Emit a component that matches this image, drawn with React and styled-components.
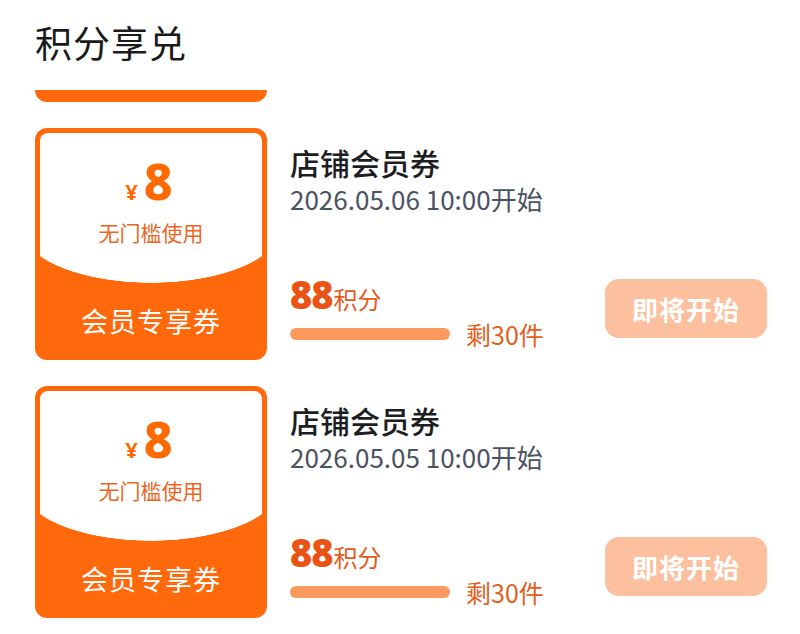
import React, { useLayoutEffect, useRef } from "react";
import styled, { createGlobalStyle } from "styled-components";

const GlobalStyle = createGlobalStyle`
  html, body {
    margin: 0;
    padding: 0;
    background: #ffffff;
  }
  body {
    font-family: "Noto Sans CJK SC", "Noto Sans", sans-serif;
  }
  * { box-sizing: border-box; }
`;

const Page = styled.div`
  width: 800px;
  height: 634px;
  padding: 0 33px 0 35px;
  display: flex;
  flex-direction: column;
  overflow: hidden;
  background: #ffffff;
`;

const Header = styled.h1`
  margin: 0;
  padding-top: 20px;
  font-size: 37px;
  line-height: 44px;
  font-weight: 400;
  color: #1a1a1a;
  letter-spacing: 1px;
  flex: none;
`;

const Viewport = styled.div`
  margin-top: 26px;
  flex: 1;
  min-height: 0;
  overflow: hidden;
`;

const List = styled.div`
  display: flex;
  flex-direction: column;
  gap: 26px;
`;

const Row = styled.div`
  display: flex;
  gap: 23px;
  height: 232px;
  flex: none;
`;

const Card = styled.div`
  width: 232px;
  flex: none;
  background: #ff680b;
  border-radius: 12px;
  padding: 5px 5px 0;
  display: flex;
  flex-direction: column;
  overflow: hidden;
`;

const CardTop = styled.div`
  height: 150px;
  border-radius: 8px 8px 0 0;
  background:
    radial-gradient(130px 55px at 50% 95px, #ffffff 99%, rgba(255,255,255,0) 100%),
    linear-gradient(#ffffff, #ffffff) top / 100% 95px no-repeat;
  display: flex;
  flex-direction: column;
  align-items: center;
  padding-top: 23px;
`;

const Amount = styled.div`
  display: flex;
  align-items: baseline;
  color: #ff6a00;
  font-family: "Noto Sans", "Noto Sans CJK SC", sans-serif;
  margin-left: -4px;
`;

const Currency = styled.span`
  font-size: 22px;
  font-weight: 700;
  line-height: 1;
  margin-right: 6px;
`;

const Value = styled.span`
  font-size: 50px;
  font-weight: 800;
  line-height: 50px;
`;

const Condition = styled.div`
  margin-top: 12px;
  font-size: 21px;
  line-height: 28px;
  color: #ea661f;
`;

const CardLabel = styled.div`
  flex: 1;
  display: flex;
  align-items: center;
  justify-content: center;
  color: #ffffff;
  font-size: 27px;
  letter-spacing: 1px;
  padding-bottom: 2px;
`;

const Info = styled.div`
  flex: 1;
  display: flex;
  flex-direction: column;
`;

const Title = styled.div`
  margin-top: 16px;
  font-size: 30px;
  line-height: 36px;
  font-weight: 500;
  color: #1c1e24;
`;

const DateText = styled.div`
  margin-top: 3px;
  font-size: 26px;
  line-height: 32px;
  color: #4b5262;
`;

const Bottom = styled.div`
  margin-top: auto;
  padding-bottom: 10px;
  display: flex;
  justify-content: space-between;
  align-items: flex-start;
`;

const Stats = styled.div`
  display: flex;
  flex-direction: column;
`;

const Points = styled.div`
  display: flex;
  align-items: baseline;
  height: 36px;
  margin-bottom: 6px;
`;

const PointsValue = styled.span`
  font-family: "Noto Sans", "Noto Sans CJK SC", sans-serif;
  font-size: 38px;
  line-height: 36px;
  font-weight: 900;
  color: #ea5313;
  letter-spacing: -1px;
`;

const PointsUnit = styled.span`
  font-size: 24px;
  line-height: 36px;
  color: #e25b1b;
  margin-left: 1px;
`;

const StockRow = styled.div`
  display: flex;
  align-items: center;
  gap: 16px;
  height: 32px;
`;

const Bar = styled.div`
  width: 160px;
  height: 12px;
  border-radius: 6px;
  background: #fb985b;
`;

const Stock = styled.span`
  font-size: 25px;
  line-height: 32px;
  color: #e2601c;
`;

const ActionButton = styled.button`
  margin-top: 3px;
  width: 162px;
  height: 59px;
  border: none;
  border-radius: 14px;
  background: #fcc09e;
  color: #ffffff;
  font-family: "Noto Sans CJK SC", sans-serif;
  font-size: 26px;
  font-weight: 700;
  letter-spacing: 1px;
  padding: 0;
`;

const coupons = [
  { id: 1, date: "2026.05.07 10:00开始" },
  { id: 2, date: "2026.05.06 10:00开始" },
  { id: 3, date: "2026.05.05 10:00开始" },
  { id: 4, date: "2026.05.04 10:00开始" },
];

function Coupon({ date }) {
  return (
    <Row>
      <Card>
        <CardTop>
          <Amount>
            <Currency>¥</Currency>
            <Value>8</Value>
          </Amount>
          <Condition>无门槛使用</Condition>
        </CardTop>
        <CardLabel>会员专享券</CardLabel>
      </Card>
      <Info>
        <Title>店铺会员券</Title>
        <DateText>{date}</DateText>
        <Bottom>
          <Stats>
            <Points>
              <PointsValue>88</PointsValue>
              <PointsUnit>积分</PointsUnit>
            </Points>
            <StockRow>
              <Bar />
              <Stock>剩30件</Stock>
            </StockRow>
          </Stats>
          <ActionButton>即将开始</ActionButton>
        </Bottom>
      </Info>
    </Row>
  );
}

export default function App() {
  const viewportRef = useRef(null);
  useLayoutEffect(() => {
    if (viewportRef.current) viewportRef.current.scrollTop = 220;
  }, []);
  return (
    <>
      <GlobalStyle />
      <Page>
        <Header>积分享兑</Header>
        <Viewport ref={viewportRef}>
          <List>
            {coupons.map((c) => (
              <Coupon key={c.id} date={c.date} />
            ))}
          </List>
        </Viewport>
      </Page>
    </>
  );
}
